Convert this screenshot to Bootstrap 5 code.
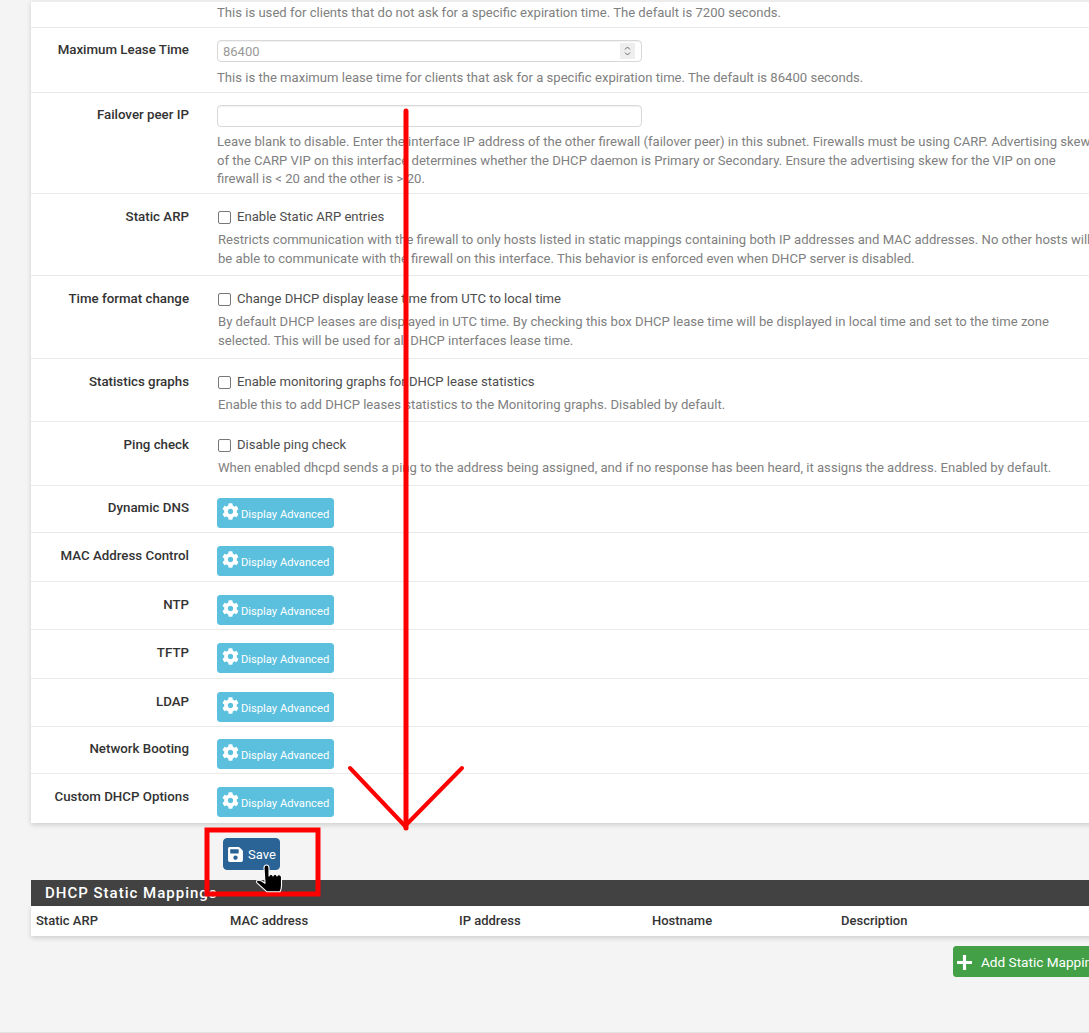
<!DOCTYPE html>
<html lang="en">
<head>
<meta charset="utf-8">
<title>DHCP Server</title>
<link rel="stylesheet" href="https://cdn.jsdelivr.net/npm/bootstrap@5.3.0/dist/css/bootstrap.min.css">
<style>
html,body{height:100%;}
body{background:#f4f4f4;font-family:Roboto,"Liberation Sans",sans-serif;font-size:13px;color:#333;overflow:hidden;width:1089px;height:1033px;position:relative;}
.page-wrap{width:1258px;margin-left:31px;}
.form-panel{background:#fff;box-shadow:0 2px 5px rgba(0,0,0,.16);border-top:1px solid #ececec;margin-top:1px;}
.frow{display:flex;border-bottom:1px solid #e9e9e9;}
.frow:last-child{border-bottom:0;}
.flabel{width:158px;flex:none;text-align:right;font-weight:500;font-size:13.3px;line-height:18px;color:#333;margin-right:28px;margin-top:1px;}
.fbody{flex:1;min-width:0;}
.fhelp{color:#808080;font-size:13.1px;line-height:18.6px;white-space:nowrap;}
.ra{height:26px;}.rb{height:65px;padding-top:12px;}.rc{height:101px;padding-top:12px;}.rd{height:82px;padding-top:13px;}.re{height:83px;padding-top:13px;}.rf{height:63px;padding-top:13px;}.rg{height:64px;padding-top:13px;}
.hA{height:47px;padding-top:12px;}.hB{height:49px;padding-top:13px;}.hC{height:48px;padding-top:13px;}.hD{height:49px;padding-top:13px;}
.ra .fhelp{padding-top:2px;}
.num-wrap{position:relative;width:425px;}
.form-control.fld{height:22px;min-height:22px;width:425px;padding:0 5px;font-size:13px;border-radius:4px;border-color:#d8d8d8;box-shadow:inset 0 1px 1px rgba(0,0,0,.06);}
.form-control.fld::placeholder{color:#999;}
.spin{position:absolute;right:7px;top:3px;width:15px;height:16px;background:#eee;display:block;}
.spin svg{display:block;}
.rb .fhelp{margin-top:7px;}
.rc .fhelp{margin-top:6px;}
.chk{display:flex;align-items:center;line-height:18px;font-size:13.1px;color:#4d4d4d;padding-top:1px;}
.form-check-input.box{width:13px;height:13px;margin:0 6px 0 1px;border-radius:2px;border:1px solid #777;flex:none;}
.chk + .fhelp{margin-top:5px;padding-left:1px;}
.btn-adv.btn{background:#5bc0de;border-color:#5bc0de;color:#fff;font-size:11.2px;height:30px;width:117px;padding:0 0 0 4px;border-radius:3px;display:flex;align-items:center;gap:2px;line-height:1;}
.btn-adv svg{width:17px;height:17px;fill:#fff;margin-top:-3px;flex:none;}
.btn-adv span{margin-top:4px;}
.save-row{padding:15px 0 10px 192px;}
.btn-keep.btn{background:#2a6496;border-color:#2a6496;color:#fff;font-size:13px;width:57px;height:32px;padding:1px 0 0 3px;border-radius:4px;display:flex;align-items:center;gap:4px;}
.btn-keep svg{width:17px;height:17px;fill:#fff;flex:none;}
.sec-head{background:#424242;color:#fff;font-size:15px;font-weight:500;letter-spacing:1px;height:26px;line-height:26px;padding-left:14px;margin:0;}
.tbl-panel{background:#fff;box-shadow:0 2px 5px rgba(0,0,0,.16);height:30px;}
.map-table{table-layout:fixed;width:1258px;margin:0;}
.map-table th{padding:0 0 0 5px;height:30px;vertical-align:middle;font-size:13px;font-weight:500;color:#333;border:0;background:transparent;}
.c1{width:194px;}.c2{width:229px;}.c3{width:193px;}.c4{width:189px;}
.add-row{padding-top:10px;padding-left:922px;}
.btn-add.btn{background:#43a047;border-color:#43a047;color:#fff;font-size:13.6px;height:31px;width:190px;padding:1px 0 0 2px;border-radius:3px;display:flex;align-items:center;gap:8px;white-space:nowrap;}
.btn-add svg{width:17px;height:17px;fill:#fff;flex:none;}
.bottom-line{position:absolute;left:0;right:0;top:1032px;height:1px;background:#e4e4e4;}
.annot{position:absolute;left:0;top:0;pointer-events:none;}
</style>
</head>
<body>
<svg width="0" height="0" class="d-block position-absolute">
<symbol id="gear" viewBox="0 0 512 512"><path d="M487.4 315.7l-42.6-24.6c4.3-23.2 4.3-47 0-70.2l42.6-24.6c4.9-2.8 7.1-8.6 5.5-14-11.1-35.6-30-67.8-54.7-94.6-3.8-4.1-10-5.1-14.8-2.3L380.8 110c-17.9-15.4-38.5-27.3-60.8-35.1V25.8c0-5.6-3.9-10.5-9.4-11.7-36.7-8.2-74.3-7.8-109.2 0-5.5 1.2-9.4 6.1-9.4 11.7V75c-22.2 7.9-42.8 19.8-60.8 35.1L88.7 85.5c-4.9-2.8-11-1.9-14.8 2.3-24.7 26.7-43.6 58.9-54.7 94.6-1.7 5.4.6 11.2 5.5 14L67.3 221c-4.3 23.2-4.3 47 0 70.2l-42.6 24.6c-4.9 2.8-7.1 8.6-5.5 14 11.1 35.6 30 67.8 54.7 94.6 3.8 4.1 10 5.1 14.8 2.3l42.6-24.6c17.9 15.4 38.5 27.3 60.8 35.1v49.2c0 5.6 3.9 10.5 9.4 11.7 36.7 8.2 74.3 7.8 109.2 0 5.5-1.2 9.4-6.1 9.4-11.7v-49.2c22.2-7.9 42.8-19.8 60.8-35.1l42.6 24.6c4.9 2.8 11 1.9 14.8-2.3 24.7-26.7 43.6-58.9 54.7-94.6 1.5-5.5-.7-11.3-5.6-14.1zM256 336c-44.1 0-80-35.9-80-80s35.9-80 80-80 80 35.9 80 80-35.9 80-80 80z"/></symbol>
</svg>
<div class="page-wrap">
  <div class="form-panel">
    <div class="frow ra"><div class="flabel"></div><div class="fbody"><div class="fhelp">This is used for clients that do not ask for a specific expiration time. The default is 7200 seconds.</div></div></div>
    <div class="frow rb"><div class="flabel">Maximum Lease Time</div><div class="fbody">
      <div class="num-wrap"><input class="form-control fld" type="text" placeholder="86400" aria-label="Maximum Lease Time"><span class="spin"><svg width="15" height="16" viewBox="0 0 15 16" fill="none" stroke="#666" stroke-width="1"><path d="M5 6.5l2.5-2.5 2.5 2.5M5 9.5l2.5 2.5 2.5-2.5"/></svg></span></div>
      <div class="fhelp">This is the maximum lease time for clients that ask for a specific expiration time. The default is 86400 seconds.</div></div></div>
    <div class="frow rc"><div class="flabel">Failover peer IP</div><div class="fbody">
      <input class="form-control fld" type="text" aria-label="Failover peer IP">
      <div class="fhelp">Leave blank to disable. Enter the interface IP address of the other firewall (failover peer) in this subnet. Firewalls must be using CARP. Advertising skew<br>of the CARP VIP on this interface determines whether the DHCP daemon is Primary or Secondary. Ensure the advertising skew for the VIP on one<br>firewall is &lt; 20 and the other is &gt; 20.</div></div></div>
    <div class="frow rd"><div class="flabel">Static ARP</div><div class="fbody">
      <label class="chk"><input class="form-check-input box" type="checkbox">Enable Static ARP entries</label>
      <div class="fhelp">Restricts communication with the firewall to only hosts listed in static mappings containing both IP addresses and MAC addresses. No other hosts will<br>be able to communicate with the firewall on this interface. This behavior is enforced even when DHCP server is disabled.</div></div></div>
    <div class="frow re"><div class="flabel">Time format change</div><div class="fbody">
      <label class="chk"><input class="form-check-input box" type="checkbox">Change DHCP display lease time from UTC to local time</label>
      <div class="fhelp">By default DHCP leases are displayed in UTC time. By checking this box DHCP lease time will be displayed in local time and set to the time zone<br>selected. This will be used for all DHCP interfaces lease time.</div></div></div>
    <div class="frow rf"><div class="flabel">Statistics graphs</div><div class="fbody">
      <label class="chk"><input class="form-check-input box" type="checkbox">Enable monitoring graphs for DHCP lease statistics</label>
      <div class="fhelp">Enable this to add DHCP leases statistics to the Monitoring graphs. Disabled by default.</div></div></div>
    <div class="frow rg"><div class="flabel">Ping check</div><div class="fbody">
      <label class="chk"><input class="form-check-input box" type="checkbox">Disable ping check</label>
      <div class="fhelp">When enabled dhcpd sends a ping to the address being assigned, and if no response has been heard, it assigns the address. Enabled by default.</div></div></div>
    <div class="frow hA"><div class="flabel">Dynamic DNS</div><div class="fbody"><button class="btn btn-adv" type="button"><svg><use href="#gear"/></svg><span>Display Advanced</span></button></div></div>
    <div class="frow hB"><div class="flabel">MAC Address Control</div><div class="fbody"><button class="btn btn-adv" type="button"><svg><use href="#gear"/></svg><span>Display Advanced</span></button></div></div>
    <div class="frow hC"><div class="flabel">NTP</div><div class="fbody"><button class="btn btn-adv" type="button"><svg><use href="#gear"/></svg><span>Display Advanced</span></button></div></div>
    <div class="frow hB"><div class="flabel">TFTP</div><div class="fbody"><button class="btn btn-adv" type="button"><svg><use href="#gear"/></svg><span>Display Advanced</span></button></div></div>
    <div class="frow hC"><div class="flabel">LDAP</div><div class="fbody"><button class="btn btn-adv" type="button"><svg><use href="#gear"/></svg><span>Display Advanced</span></button></div></div>
    <div class="frow hA"><div class="flabel">Network Booting</div><div class="fbody"><button class="btn btn-adv" type="button"><svg><use href="#gear"/></svg><span>Display Advanced</span></button></div></div>
    <div class="frow hD"><div class="flabel">Custom DHCP Options</div><div class="fbody"><button class="btn btn-adv" type="button"><svg><use href="#gear"/></svg><span>Display Advanced</span></button></div></div>
  </div>
  <div class="save-row"><button class="btn btn-keep" type="button"><svg viewBox="0 0 448 512"><path d="M433.941 129.941l-83.882-83.882A48 48 0 0 0 316.118 32H48C21.49 32 0 53.49 0 80v352c0 26.51 21.49 48 48 48h352c26.51 0 48-21.49 48-48V163.882a48 48 0 0 0-14.059-33.941zM224 416c-35.346 0-64-28.654-64-64 0-35.346 28.654-64 64-64s64 28.654 64 64c0 35.346-28.654 64-64 64zm96-304.52V212c0 6.627-5.373 12-12 12H76c-6.627 0-12-5.373-12-12V108c0-6.627 5.373-12 12-12h228.52c3.183 0 6.235 1.264 8.485 3.515l3.48 3.48A11.996 11.996 0 0 1 320 111.48z"/></svg>Save</button></div>
  <h2 class="sec-head">DHCP Static Mappings</h2>
  <div class="tbl-panel">
    <table class="table map-table"><thead><tr><th class="c1">Static ARP</th><th class="c2">MAC address</th><th class="c3">IP address</th><th class="c4">Hostname</th><th>Description</th></tr></thead></table>
  </div>
  <div class="add-row"><button class="btn btn-add" type="button"><svg viewBox="0 0 16 16"><path d="M6.5 1h3v5.5H15v3H9.5V15h-3V9.5H1v-3h5.5z"/></svg>Add Static Mapping</button></div>
</div>
<div class="bottom-line"></div>
<svg class="annot" width="1089" height="1033" viewBox="0 0 1089 1033">
  <g fill="none" stroke="#fe0000" stroke-linecap="round">
    <path d="M406 111V828" stroke-width="5"/>
    <path d="M350 768L405 826L462 768" stroke-width="4"/>
    <rect x="207" y="830" width="111" height="64" stroke-width="5" stroke-linecap="butt"/>
  </g>
  <path d="M264 868q0-3 2.5-3t2.5 3v8q0-1.500 2-1.500t2 1.500q0-1.500 2-1.500t2 1.500q0-1.200 2-1.200t2.500 2v9q0 3-1.500 6h-13l-10-9q-1.500-2 1-2.500q2-.3 4 1l3 2z" fill="#000" stroke="#fff" stroke-width="1.1" stroke-linejoin="round"/>
</svg>
</body>
</html>
